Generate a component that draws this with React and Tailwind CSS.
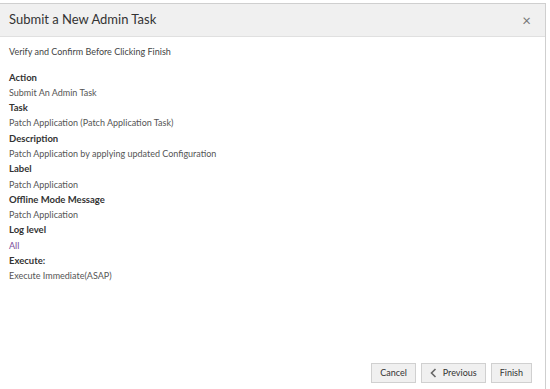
import React from 'react';

const rows = [
  { label: 'Action', value: 'Submit An Admin Task' },
  { label: 'Task', value: 'Patch Application (Patch Application Task)' },
  { label: 'Description', value: 'Patch Application by applying updated Configuration' },
  { label: 'Label', value: 'Patch Application' },
  { label: 'Offline Mode Message', value: 'Patch Application' },
  { label: 'Log level', value: 'All', accent: true },
  { label: 'Execute:', value: 'Execute Immediate(ASAP)' },
];

const App = () => {
  return (
    <div className="w-[550px] h-[389px] bg-white pt-[3px] font-['Lato',sans-serif] overflow-hidden">
      <div className="w-[546px] h-[386px] flex flex-col border-t border-r border-[#cfcfcf]">
        {/* Header */}
        <div className="h-[33px] shrink-0 flex items-center justify-between bg-[#f0f0f0] border-b border-[#e0e0e0] pl-[9px] pr-[14px]">
          <h1 className="text-[13px] text-[#333]">Submit a New Admin Task</h1>
          <button className="text-[#777] text-[15px] leading-none">×</button>
        </div>

        {/* Body */}
        <div className="flex-1 px-[9px] pt-[8px]">
          <p className="text-[9px] text-[#444] mb-[11px]">Verify and Confirm Before Clicking Finish</p>
          <div className="flex flex-col">
            {rows.map(row => (
              <div key={row.label} className="flex flex-col">
                <span className="text-[9.5px] leading-[15.3px] font-bold text-[#333]">{row.label}</span>
                <span className={`text-[9px] leading-[15.3px] ${row.accent ? 'text-[#7a4c9a]' : 'text-[#555]'}`}>
                  {row.value}
                </span>
              </div>
            ))}
          </div>
        </div>

        {/* Footer */}
        <div className="flex justify-end gap-[5px] pr-[13px] pb-[6px]">
          <button className="h-[20px] px-[8px] bg-[#f0f0f0] border border-[#d0d0d0] text-[9px] text-[#333]">Cancel</button>
          <button className="h-[20px] pl-[8px] pr-[8px] bg-[#f0f0f0] border border-[#d0d0d0] text-[9px] text-[#333] flex items-center gap-[6px]">
            <svg width="7" height="10" viewBox="0 0 7 10">
              <path d="M5.5 1 L1.5 5 L5.5 9" fill="none" stroke="#666" strokeWidth="1.6" />
            </svg>
            Previous
          </button>
          <button className="h-[20px] px-[8px] bg-[#f0f0f0] border border-[#d0d0d0] text-[9px] text-[#333]">Finish</button>
        </div>
      </div>
    </div>
  );
};

export default App;
